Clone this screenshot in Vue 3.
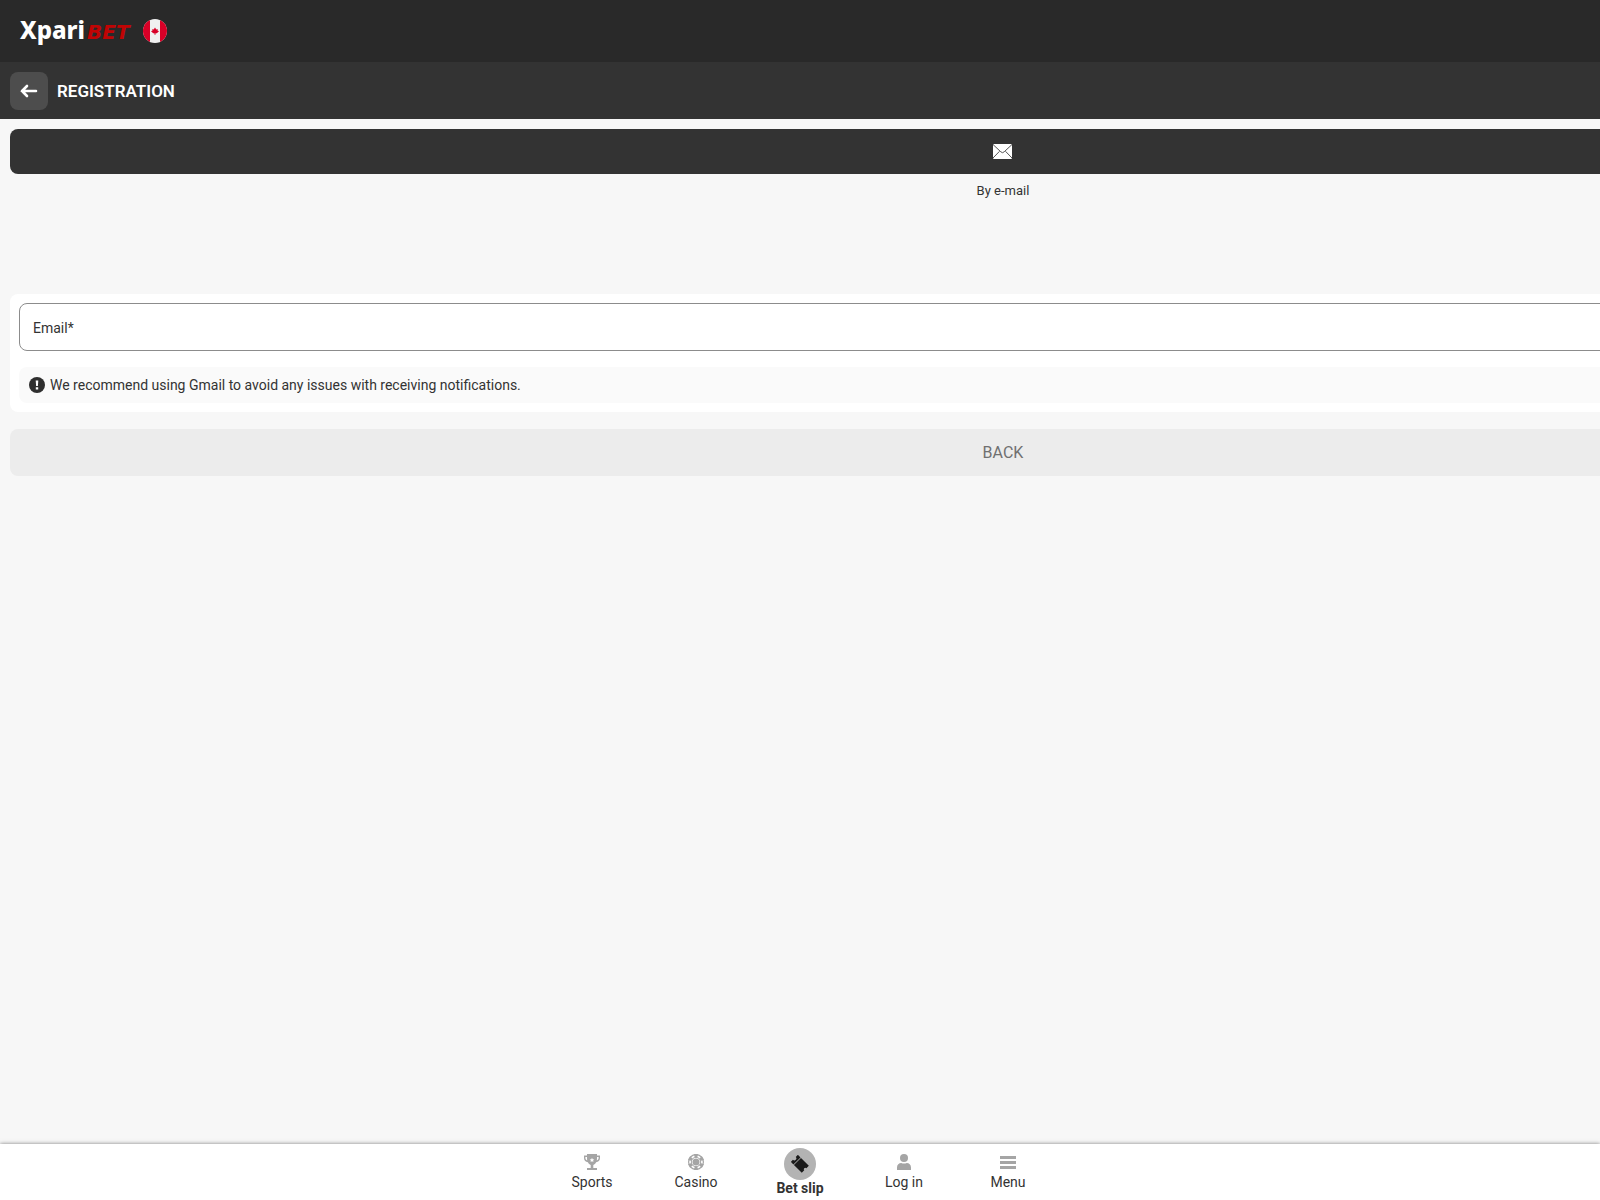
<script setup>
import {ref} from "vue";

const email = ref("");
const items = [
  {id: "sports", title: "Sports"},
  {id: "casino", title: "Casino"},
  {id: "slip", title: "Bet slip"},
  {id: "login", title: "Log in"},
  {id: "menu", title: "Menu"}
];
const chipAngles = [0, 60, 120, 180, 240, 300];
</script>
<template>
  <div class="page">
    <header class="header">
      <a class="logo" href="#"><span class="logo__main">Xpari</span><span class="logo__bet">BET</span></a>
      <svg class="flag" viewBox="0 0 24 24">
        <clipPath id="flag-circle"><circle cx="12" cy="12" r="12"/></clipPath>
        <g clip-path="url(#flag-circle)">
          <path fill="#f0f0f0" d="M0 0h24v24H0z"/>
          <path fill="#d80027" d="M0 0h7v24H0zM17 0h7v24h-7z"/>
          <path fill="#d80027" d="M12 8.500l1.300 1.900 1.400-.5-.2 1.600 1.500.8-2.200 1.900h-1.300v1.600h-1v-1.600h-1.300L8 12.300l1.500-.8-.2-1.600 1.400.5z"/>
        </g>
      </svg>
    </header>
    <div class="title-bar">
      <button class="title-bar__back" type="button" aria-label="Back">
        <svg viewBox="0 0 18 14"><path d="M16 7H2M7 2L2 7l5 5"/></svg>
      </button>
      <h1>REGISTRATION</h1>
    </div>
    <main class="content">
      <button class="method" type="button">
        <span class="method__box">
          <svg viewBox="0 0 20 16">
            <rect x="0" y="0" width="19" height="15" rx="1" fill="#fff"/>
            <path d="M0 .5L7.800 7.800Q9.500 9.600 11.200 7.800L19 .5M0 14L6.500 7.300M19 14L12.500 7.300" fill="none" stroke="#555"/>
          </svg>
        </span>
        <span class="method__label">By e-mail</span>
      </button>
      <form class="form" @submit.prevent>
        <div class="card">
          <input id="email" v-model="email" class="field" type="email" placeholder="Email*" aria-label="Email*">
          <p class="note">
            <svg viewBox="0 0 16 16">
              <circle cx="8" cy="8" r="8" fill="#2f2f2f"/>
              <path d="M6.700 3.400h2.600L8.900 9H7.100zM6.800 10.200h2.400v2.200H6.800z" fill="#fff"/>
            </svg>
            We recommend using Gmail to avoid any issues with receiving notifications.
          </p>
        </div>
        <button class="back" type="button">BACK</button>
      </form>
    </main>
    <nav class="nav">
      <a v-for="item in items" :key="item.id" href="#" class="nav__item" :class='{"nav__item--active": item.id === "slip"}'>
        <span class="nav__icon">
          <svg v-if="item.id === 'sports'" viewBox="0 0 16 16">
            <path fill="#a5a5a5" fill-rule="evenodd" d="M3 0h10v1.500h3V4c0 2.400-1.700 3.900-3.900 4.300C11.500 9.700 10.400 10.700 9.300 11v3H13v2H3v-2h3.700v-3C5.600 10.700 4.500 9.700 3.900 8.300 1.700 7.900 0 6.400 0 4V1.500h3zM1.400 2.900V4c0 1.200.7 2.100 1.800 2.500C3 5.500 3 4.300 3 2.900zM14.600 2.900H13c0 1.400 0 2.600-.2 3.600 1.100-.4 1.800-1.300 1.800-2.500z"/>
            <path fill="#fff" d="M8 3.800l.7 1.400 1.600.2-1.200 1.100.3 1.600L8 7.300l-1.400.8.3-1.600-1.200-1.100 1.600-.2z"/>
          </svg>
          <svg v-else-if="item.id === 'casino'" viewBox="0 0 16 16">
            <circle cx="8" cy="8" r="7.400" fill="#fff" stroke="#a5a5a5" stroke-width="1.200"/>
            <path v-for="angle in chipAngles" :key="angle" :transform="`rotate(${angle} 8 8)`" d="M6 0h4l-.7 3.500H6.700z" fill="#a5a5a5"/>
            <circle cx="8" cy="8" r="4.700" fill="none" stroke="#a5a5a5"/>
            <circle cx="8" cy="8" r="3.500" fill="#a5a5a5"/>
          </svg>
          <svg v-else-if="item.id === 'slip'" class="ticket" viewBox="0 0 18 18">
            <g transform="rotate(45 9 9)" fill="#1a1a1a">
              <path d="M1 4h3.700v10H1v-3a2 2 0 0 0 0-4z"/>
              <path d="M5.400 4H16.500v3.500a1.500 1.500 0 0 0 0 3V14H5.400z"/>
            </g>
          </svg>
          <svg v-else-if="item.id === 'login'" viewBox="0 0 16 16" fill="#a5a5a5">
            <circle cx="8" cy="4" r="4"/>
            <path d="M1 16v-2.500C1 10.500 3 9 5.200 9c1.800.8 3.800.8 5.600 0C13 9 15 10.500 15 13.500V16z"/>
          </svg>
          <svg v-else viewBox="0 0 16 16" fill="#a5a5a5">
            <path d="M0 2h16v3H0zM0 7h16v3H0zM0 12h16v3H0z"/>
          </svg>
        </span>
        <span>{{ item.title }}</span>
      </a>
    </nav>
  </div>
</template>
<style>
body {
  background: #f7f7f7;
}
</style>
<style scoped>
* {
  box-sizing: border-box;
}

.page {
  display: flex;
  flex-direction: column;
  min-height: 100vh;
  overflow: hidden;
  background: #f7f7f7;
  color: #333;
  font-family: Roboto, sans-serif;
  font-size: 14px;
}

.page button {
  border: 0;
  padding: 0;
  font-family: inherit;
  cursor: pointer;
}

.header {
  display: flex;
  align-items: center;
  gap: 13px;
  height: 62px;
  padding: 0 20px;
  background: #292929;
}

.logo {
  display: flex;
  align-items: baseline;
  gap: 2px;
  text-decoration: none;
  line-height: 32px;
}

.logo__main {
  color: #fff;
  font-family: "Noto Sans", sans-serif;
  font-size: 24px;
  font-weight: 800;
}

.logo__bet {
  color: #c00404;
  font-family: "DejaVu Sans", sans-serif;
  font-size: 20px;
  font-style: italic;
  font-weight: 700;
}

.flag {
  width: 24px;
  height: 24px;
}

.title-bar {
  display: flex;
  align-items: center;
  gap: 9px;
  height: 57px;
  padding: 0 10px;
  background: #333;
}

.title-bar h1 {
  margin: 0;
  color: #fff;
  font-size: 17px;
  font-weight: 600;
  line-height: 20px;
}

.title-bar__back {
  display: flex;
  align-items: center;
  justify-content: center;
  width: 38px;
  height: 38px;
  border-radius: 8px;
  background: #4d4d4d;
}

.title-bar__back svg {
  width: 18px;
  height: 14px;
  fill: none;
  stroke: #fff;
  stroke-width: 2.6;
  stroke-linecap: round;
}

/* the registration strip runs past the right edge of the window */
.content {
  flex: 1;
  margin-right: calc(-25% - 6px);
  padding: 10px;
}

.method {
  display: block;
  width: 100%;
  background: none;
  color: #333;
}

.method__box {
  display: flex;
  align-items: center;
  justify-content: center;
  height: 45px;
  border-radius: 8px;
  background: #333;
}

.method__box svg {
  width: 20px;
  height: 16px;
}

.method__label {
  display: block;
  padding-top: 8px;
  font-size: 13px;
  line-height: 18px;
}

.form {
  margin-top: 94px;
}

.card {
  padding: 9px;
  border-radius: 8px;
  background: #fff;
}

.field {
  display: block;
  width: 100%;
  height: 48px;
  padding: 1px 13px 0;
  border: 1px solid #8c8c8c;
  border-radius: 8px;
  background: #fff;
  color: #333;
  font-family: inherit;
  font-size: 14px;
}

.field::placeholder {
  color: #333;
  opacity: 1;
}

.note {
  display: flex;
  align-items: center;
  gap: 5px;
  height: 36px;
  margin: 16px 0 0;
  padding: 0 10px;
  border-radius: 8px;
  background: #fafafa;
}

.note svg {
  width: 16px;
  height: 16px;
}

.back {
  display: block;
  width: 100%;
  height: 47px;
  margin-top: 17px;
  border-radius: 8px;
  background: #ececec;
  color: #707070;
  font-size: 16px;
}

.nav {
  display: flex;
  justify-content: center;
  height: 56px;
  background: #fff;
  box-shadow: 0 0 4px rgba(0, 0, 0, 0.5);
}

.nav__item {
  display: flex;
  flex-direction: column;
  align-items: center;
  gap: 2px;
  width: 104px;
  padding-top: 10px;
  color: #333;
  line-height: 20px;
  text-decoration: none;
}

.nav__icon {
  display: flex;
  align-items: center;
  justify-content: center;
  width: 16px;
  height: 16px;
}

.nav__icon svg {
  width: 16px;
  height: 16px;
}

.nav__item--active {
  gap: 0;
  padding-top: 4px;
  font-weight: 700;
  line-height: 16px;
}

.nav__item--active .nav__icon {
  width: 32px;
  height: 32px;
  border-radius: 50%;
  background: #b3b3b3;
}

.nav__icon .ticket {
  width: 18px;
  height: 18px;
}
</style>
